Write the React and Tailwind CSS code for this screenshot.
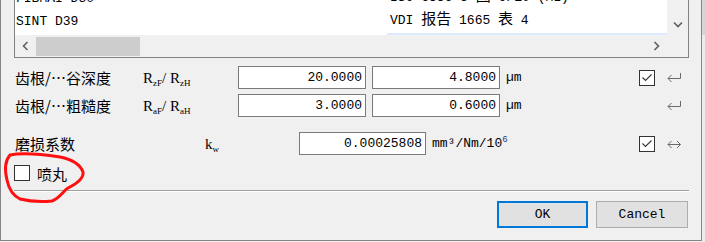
import React from "react";

const mono = "font-['Liberation_Mono','Noto_Sans_CJK_SC',monospace]";
const cjk = "font-['Noto_Sans_CJK_SC','Liberation_Sans',sans-serif]";
const serif = "font-['Liberation_Serif',serif]";

function Check({ checked }) {
  return (
    <div className="w-[16px] h-[16px] border border-[#333333] bg-white flex items-center justify-center shrink-0">
      {checked && (
        <svg width="14" height="14" viewBox="0 0 14 14">
          <path d="M2.5 6.5 L5.5 9.5 L11.5 3.5" fill="none" stroke="#3a3a3a" strokeWidth="1.2" />
        </svg>
      )}
    </div>
  );
}

function Input({ value, w }) {
  return (
    <div
      className={
        "h-[23px] border border-[#7a7a7a] bg-white flex items-center justify-end pr-[3px] text-[13px] text-black shrink-0 " +
        mono
      }
      style={{ width: w }}
    >
      {value}
    </div>
  );
}

function ReturnArrow() {
  return (
    <svg width="16" height="12" viewBox="0 0 16 12" className="shrink-0">
      <path d="M14.5 1 V6.5 H2 M5.5 3 L2 6.5 L5.5 10" fill="none" stroke="#6a6a6a" strokeWidth="1" />
    </svg>
  );
}

function BothArrow() {
  return (
    <svg width="16" height="12" viewBox="0 0 16 12" className="shrink-0">
      <path d="M2 6.5 H14.5 M5.5 3 L2 6.5 L5.5 10 M11 3 L14.5 6.5 L11 10" fill="none" stroke="#6a6a6a" strokeWidth="1" />
    </svg>
  );
}

function Sym({ base, sub }) {
  return (
    <span className={"text-[15px] text-black " + serif}>
      {base}
      <span className="text-[9px] relative top-[3px]">{sub}</span>
    </span>
  );
}

function ListRow({ a, b, sel }) {
  return (
    <div className={"flex h-[23px] items-center text-[13px] text-black " + mono}>
      <div className="w-[372px] pl-[1px] whitespace-nowrap">{a}</div>
      <div className={"flex-1 h-full flex items-center pl-[3px] whitespace-nowrap " + (sel ? "bg-[#dcecfc]" : "")}>{b}</div>
    </div>
  );
}

export default function App() {
  return (
    <div className="relative w-[705px] h-[242px] bg-[#f0f0f0] flex overflow-hidden">
      <div className="w-[702px] h-[241px] border-l border-r border-b border-[#858585] bg-[#f0f0f0] flex flex-col">
        {/* list box */}
        <div className="ml-[13px] w-[675px] h-[58px] border-l border-r border-b border-[#828282] flex flex-col shrink-0">
          <div className="flex h-[35px]">
            <div className="w-[652px] h-[35px] bg-white overflow-hidden">
              <div className="mt-[-13px]">
                <ListRow a="FIBMAI D30" b={<span>ISO 6336-5 <span className="text-[15px]">图</span> 9/10 (ML)</span>} />
                <ListRow a="SINT D39" b={<span>VDI <span className="text-[15px]">报告</span> 1665 <span className="text-[15px]">表</span> 4</span>} />
                <ListRow a="" b="" sel />
              </div>
            </div>
            <div className="w-[21px] h-[35px] bg-[#f0f0f0] flex flex-col justify-end">
              <div className="h-[21px] flex items-center justify-center">
                <svg width="10" height="7" viewBox="0 0 10 7">
                  <path d="M1 1.5 L5 5.5 L9 1.5" fill="none" stroke="#606060" strokeWidth="1.6" />
                </svg>
              </div>
            </div>
          </div>
          <div className="flex h-[22px] bg-[#f0f0f0]">
            <div className="w-[21px] h-[22px] flex items-center justify-center">
              <svg width="7" height="10" viewBox="0 0 7 10">
                <path d="M5.5 1 L1.5 5 L5.5 9" fill="none" stroke="#606060" strokeWidth="1.6" />
              </svg>
            </div>
            <div className="w-[104px] h-[19px] mt-[2px] bg-[#cdcdcd]" />
            <div className="flex-1" />
            <div className="w-[21px] h-[22px] flex items-center justify-center">
              <svg width="7" height="10" viewBox="0 0 7 10">
                <path d="M1.5 1 L5.5 5 L1.5 9" fill="none" stroke="#606060" strokeWidth="1.6" />
              </svg>
            </div>
            <div className="w-[21px] h-[22px]" />
          </div>
        </div>

        {/* row 1 */}
        <div className="mt-[8px] h-[23px] flex items-center pl-[14px] shrink-0">
          <div className={"w-[128px] text-[15px] text-black leading-none " + cjk}>齿根/…谷深度</div>
          <div className="w-[95px]">
            <Sym base="R" sub="zF" />
            <span className={"text-[15px] " + serif}>/ </span>
            <Sym base="R" sub="zH" />
          </div>
          <Input value="20.0000" w={128} />
          <div className="w-[6px]" />
          <Input value="4.8000" w={128} />
          <div className={"ml-[6px] w-[133px] text-[13px] text-black " + mono}>µm</div>
          <Check checked />
          <div className="ml-[11px]"><ReturnArrow /></div>
        </div>

        {/* row 2 */}
        <div className="mt-[5px] h-[23px] flex items-center pl-[14px] shrink-0">
          <div className={"w-[128px] text-[15px] text-black leading-none " + cjk}>齿根/…粗糙度</div>
          <div className="w-[95px]">
            <Sym base="R" sub="aF" />
            <span className={"text-[15px] " + serif}>/ </span>
            <Sym base="R" sub="aH" />
          </div>
          <Input value="3.0000" w={128} />
          <div className="w-[6px]" />
          <Input value="0.6000" w={128} />
          <div className={"ml-[6px] w-[133px] text-[13px] text-black " + mono}>µm</div>
          <div className="w-[16px]" />
          <div className="ml-[11px]"><ReturnArrow /></div>
        </div>

        {/* row 3 */}
        <div className="mt-[15px] h-[23px] flex items-center pl-[14px] shrink-0">
          <div className={"w-[190px] text-[15px] text-black leading-none " + cjk}>磨损系数</div>
          <div className="w-[94px]">
            <Sym base="k" sub="w" />
          </div>
          <Input value="0.00025808" w={127} />
          <div className={"ml-[6px] w-[207px] text-[13px] text-black " + mono}>
            mm³/Nm/10<span className="text-[9px] relative top-[-5px] text-[#1a3f8a]">6</span>
          </div>
          <Check checked />
          <div className="ml-[11px]"><BothArrow /></div>
        </div>

        {/* shot peening checkbox */}
        <div className="mt-[10px] h-[16px] flex items-center pl-[13px] shrink-0">
          <Check />
          <div className={"ml-[7px] text-[15px] text-black leading-none " + cjk}>喷丸</div>
        </div>

        {/* separator */}
        <div className="mt-[9px] ml-[13px] w-[675px] h-[1px] bg-[#a0a0a0] shrink-0" />
        <div className="ml-[13px] w-[675px] h-[1px] bg-white shrink-0" />

        {/* buttons */}
        <div className="mt-[9px] flex pl-[496px] shrink-0">
          <div className={"w-[91px] h-[27px] border-2 border-[#0078d7] bg-[#e1e1e1] flex items-center justify-center text-[13px] text-black " + mono}>
            OK
          </div>
          <div className={"ml-[8px] w-[92px] h-[27px] border border-[#adadad] bg-[#e1e1e1] flex items-center justify-center text-[13px] text-black " + mono}>
            Cancel
          </div>
        </div>
      </div>
      <div className="w-[3px] flex flex-col">
        <div className="h-[35px] bg-[#d6d6d6]" />
        <div className="flex-1 bg-[#ececec]" />
      </div>

      {/* red hand-drawn annotation */}
      <svg className="absolute left-0 top-0 pointer-events-none" width="705" height="242" viewBox="0 0 705 242">
        <path
          d="M10 155 C 20 153, 40 154, 60 157 C 70 159, 80 164, 83 172 C 84 178, 78 183, 68 188 C 62 192, 60 198, 52 201 C 42 202, 28 201, 20 199 C 14 196, 9 190, 7 180 C 5 172, 4 162, 10 155 Z"
          fill="none"
          stroke="#ff1010"
          strokeWidth="3"
          strokeLinejoin="round"
        />
      </svg>
    </div>
  );
}
